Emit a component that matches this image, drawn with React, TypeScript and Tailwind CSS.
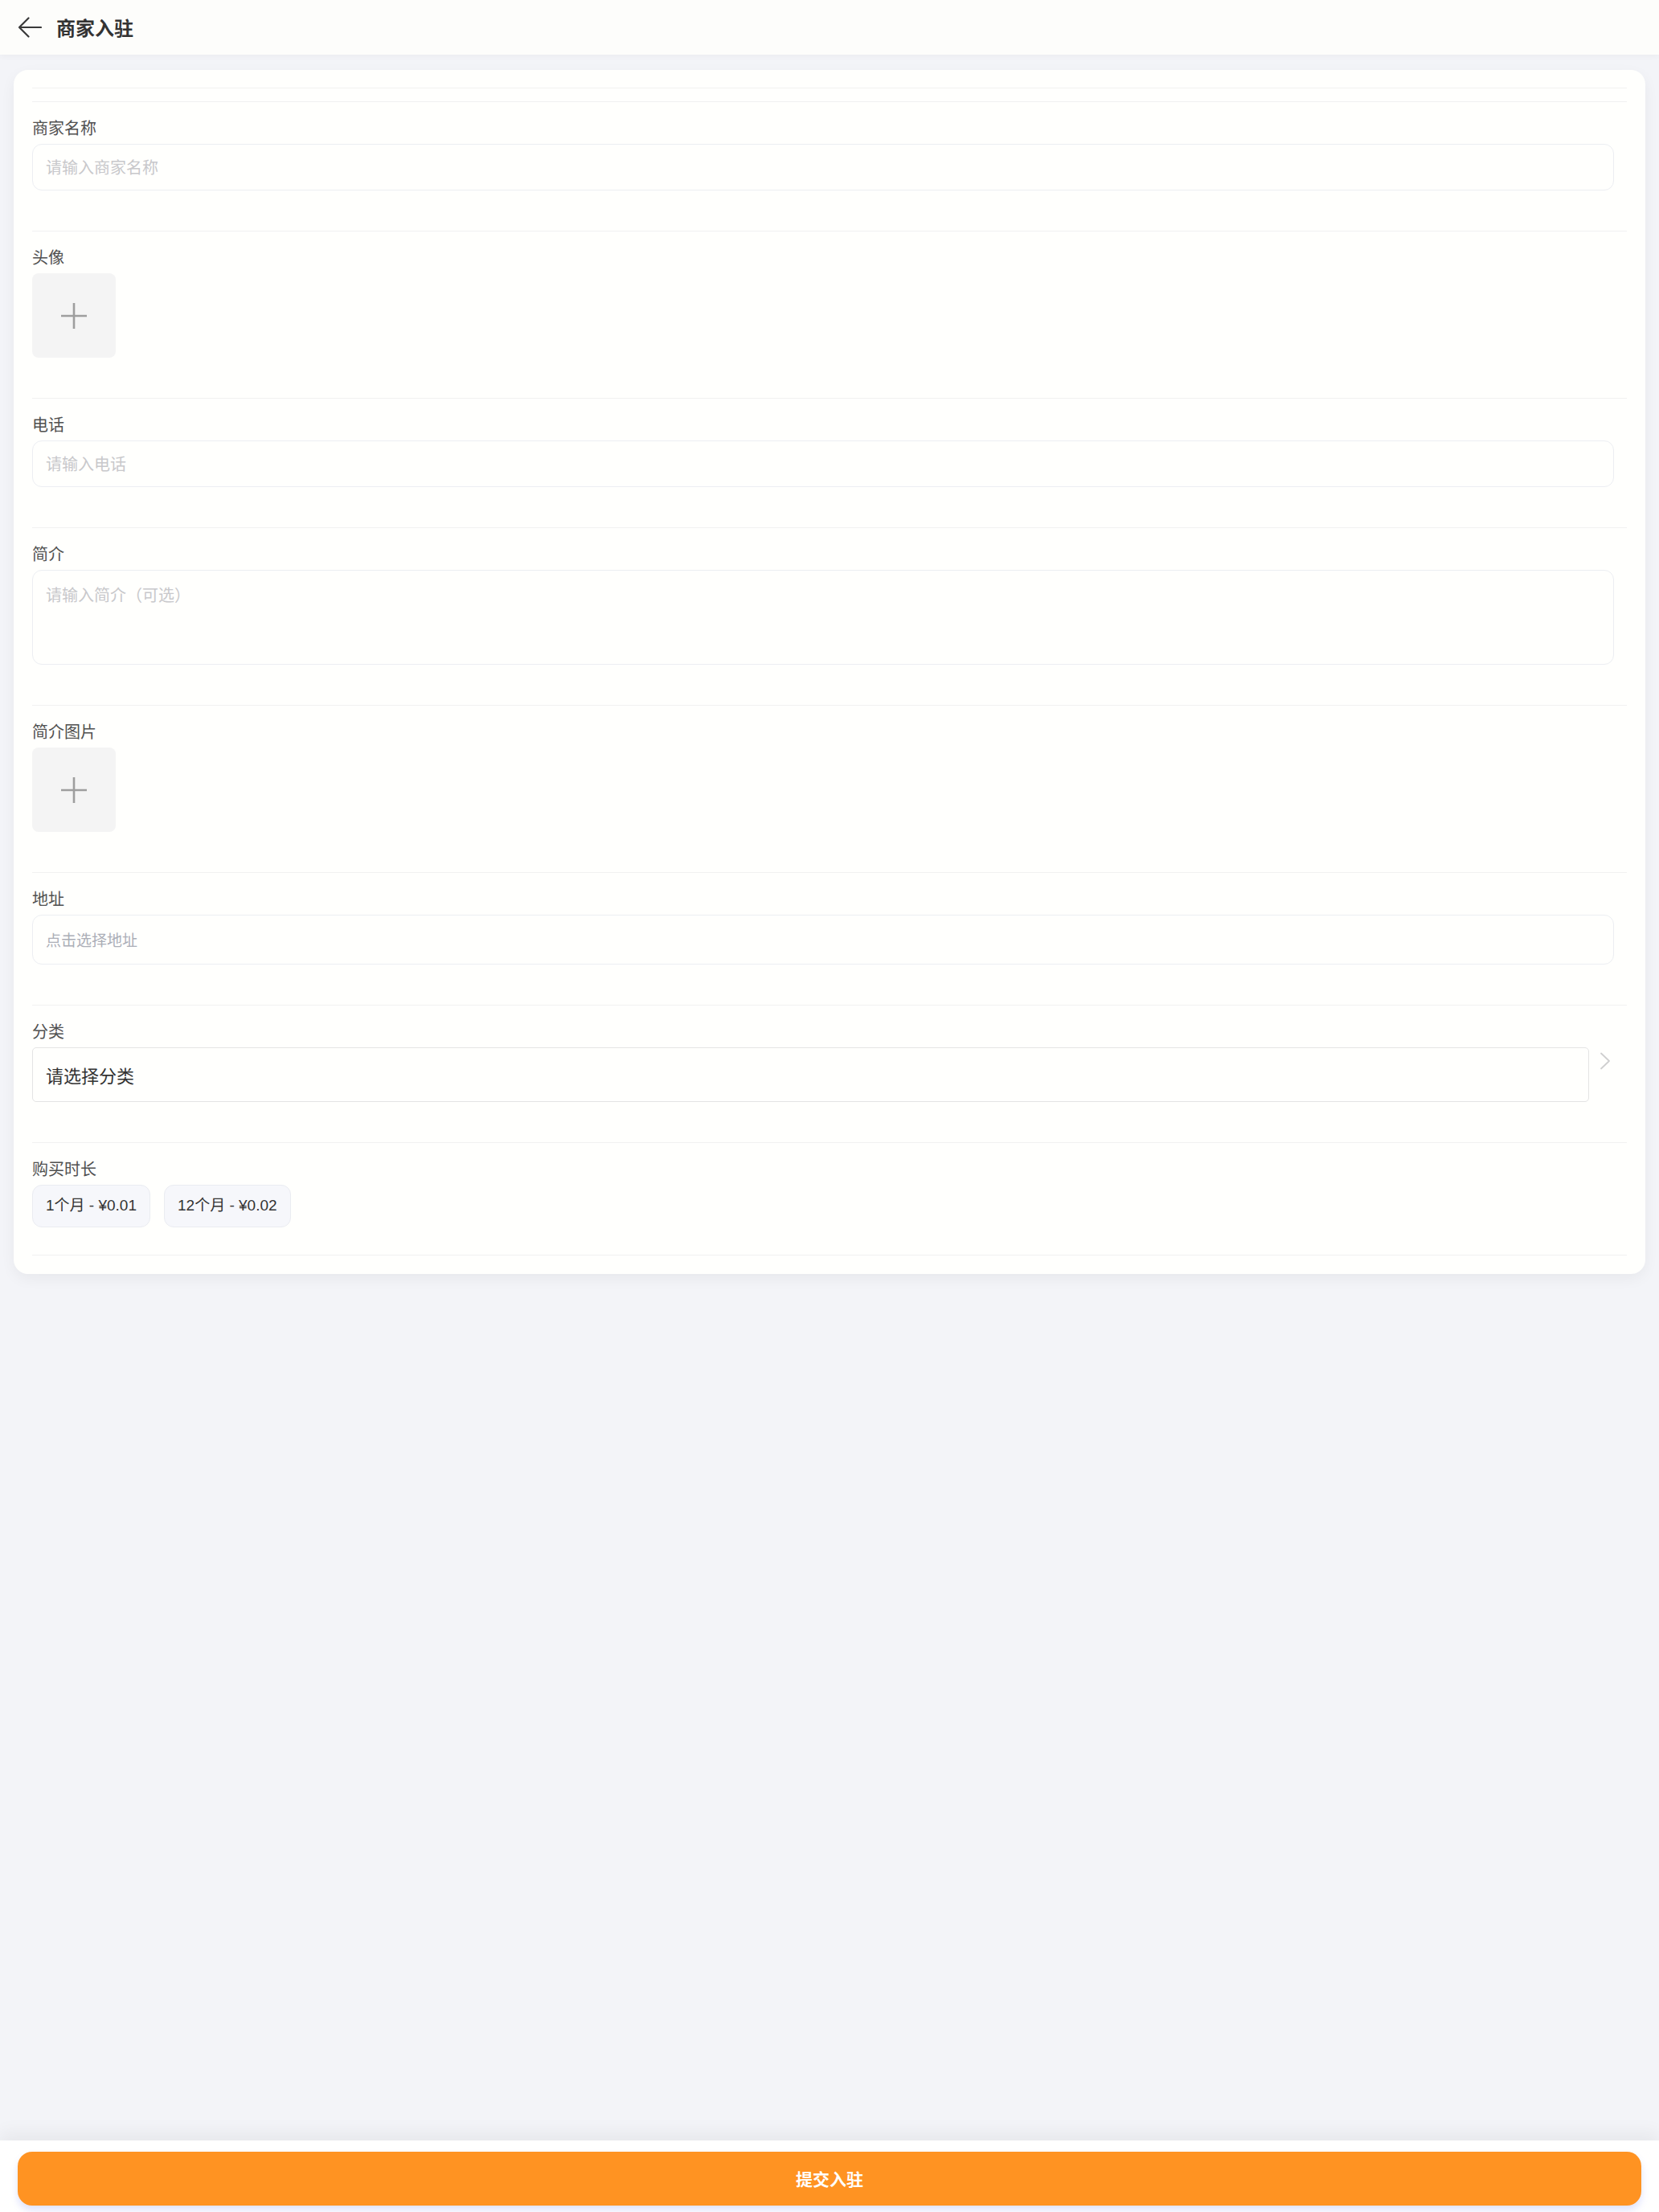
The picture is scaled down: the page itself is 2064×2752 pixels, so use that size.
import React from "react";

const FONT = { fontFamily: '"Noto Sans CJK SC", "Noto Sans", sans-serif' };
const NUM_FONT = { fontFamily: '"Liberation Sans", "Noto Sans CJK SC", sans-serif' };

function BackArrow() {
  return (
    <svg width="30" height="26" viewBox="0 0 30 26" fill="none">
      <path
        d="M13.5 1.5 L2 13 L13.5 24.5 M2 13 H29"
        stroke="#3a3a3a"
        strokeWidth="2.2"
        strokeLinecap="round"
        strokeLinejoin="round"
      />
    </svg>
  );
}

function PlusIcon() {
  return (
    <svg width="34" height="34" viewBox="0 0 34 34" fill="none">
      <path d="M17 1 V33 M1 17 H33" stroke="#9e9e9e" strokeWidth="2.6" />
    </svg>
  );
}

function Chevron() {
  return (
    <svg width="14" height="22" viewBox="0 0 14 22" fill="none">
      <path d="M2 1.5 L12 11 L2 20.5" stroke="#cfcfcf" strokeWidth="1.8" strokeLinecap="round" strokeLinejoin="round" />
    </svg>
  );
}

function Field({ label, children, last = false }: { label: string; children: React.ReactNode; last?: boolean }) {
  return (
    <div className={`border-b border-[#f1f1f1] pt-[18px] ${last ? "pb-[34px]" : "pb-[50px]"}`}>
      <div className="text-[20px] leading-[28px] text-[#505050]">{label}</div>
      <div className="mt-[6px]">{children}</div>
    </div>
  );
}

function TextInput({ placeholder }: { placeholder: string }) {
  return (
    <div className="mr-[16px] flex h-[58px] items-center rounded-[12px] border border-[#eceef2] bg-[#fffffd] px-[16px]">
      <span className="text-[20px] text-[#c8c8cb]">{placeholder}</span>
    </div>
  );
}

function Uploader() {
  return (
    <div className="flex h-[105px] w-[104px] items-center justify-center rounded-[8px] bg-[#f4f4f4]">
      <PlusIcon />
    </div>
  );
}

export default function App() {
  const plans = ["1个月 - ¥0.01", "12个月 - ¥0.02"];
  return (
    <div className="flex min-h-screen flex-col bg-[#f3f4f8]" style={FONT}>
      {/* top navigation */}
      <header className="flex h-[68px] items-center gap-[18px] bg-[#fdfdfb] pl-[22px] shadow-[0_2px_8px_rgba(0,0,0,0.04)]">
        <BackArrow />
        <h1 className="text-[24px] font-bold text-[#333333]">商家入驻</h1>
      </header>

      {/* form card */}
      <main className="mx-[17px] mt-[19px] rounded-[18px] bg-[#fffffd] px-[23px] pb-[23px] pt-[22px] shadow-[0_6px_18px_rgba(0,0,0,0.05)]">
        <div className="h-[18px] border-y border-[#f1f1f1]" />

        <Field label="商家名称">
          <TextInput placeholder="请输入商家名称" />
        </Field>

        <Field label="头像">
          <Uploader />
        </Field>

        <Field label="电话">
          <TextInput placeholder="请输入电话" />
        </Field>

        <Field label="简介">
          <div className="mr-[16px] h-[118px] rounded-[12px] border border-[#eceef2] bg-[#fffffd] px-[16px] pt-[16px]">
            <span className="text-[20px] leading-[28px] text-[#c8c8cb]">请输入简介（可选）</span>
          </div>
        </Field>

        <Field label="简介图片">
          <Uploader />
        </Field>

        <Field label="地址">
          <div className="mr-[16px] flex h-[62px] items-center rounded-[12px] border border-[#eceef2] bg-[#fffffd] px-[16px]">
            <span className="text-[19px] text-[#abaeb7]">点击选择地址</span>
          </div>
        </Field>

        <Field label="分类">
          <div className="flex items-start">
            <div className="flex h-[68px] flex-1 items-center rounded-[5px] border border-[#e4e4e4] bg-[#fffffd] px-[16px]">
              <span className="text-[22px] text-[#333333]">请选择分类</span>
            </div>
            <div className="ml-[13px] mr-[20px] mt-[6px]">
              <Chevron />
            </div>
          </div>
        </Field>

        <Field label="购买时长" last>
          <div className="flex gap-[17px]">
            {plans.map((p) => (
              <div
                key={p}
                className="flex h-[53px] items-center rounded-[12px] border border-[#eaecf1] bg-[#f6f7fb] px-[16px] text-[19px] text-[#333333]"
                style={NUM_FONT}
              >
                {p}
              </div>
            ))}
          </div>
        </Field>
      </main>

      {/* bottom action bar */}
      <footer className="mt-auto h-[89px] bg-white px-[22px] pt-[14px] shadow-[0_-10px_20px_rgba(0,0,0,0.05)]">
        <button className="flex h-[67px] w-full items-center justify-center rounded-[18px] bg-[#ff9322] text-[21px] font-bold text-white shadow-[0_6px_10px_rgba(100,115,245,0.2)]">
          提交入驻
        </button>
      </footer>
    </div>
  );
}
